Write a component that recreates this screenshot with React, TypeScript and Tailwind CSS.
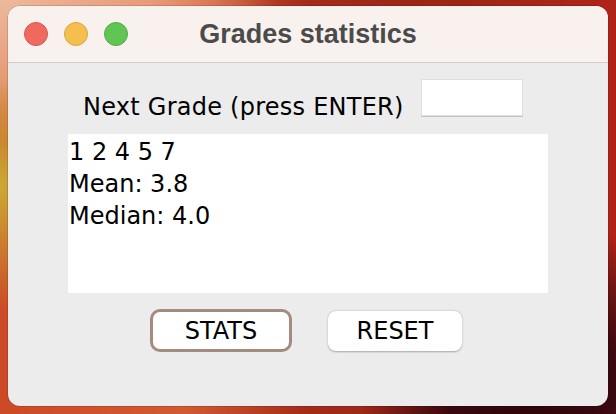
import React from "react";

export default function App() {
  const body = { fontFamily: '"DejaVu Sans", "Lucida Grande", sans-serif' };
  return (
    <div className="w-[616px] h-[414px] overflow-hidden pt-[6px] pl-[8px] bg-[radial-gradient(ellipse_28%_40%_at_86%_92%,#2a0407_0%,#3a0810_50%,rgba(58,8,16,0)_100%),radial-gradient(ellipse_12%_30%_at_0%_45%,#cbaa34_0%,rgba(203,170,52,0)_100%),radial-gradient(ellipse_45%_35%_at_0%_0%,#ecb99c_0%,#e89a78_55%,rgba(232,140,100,0)_100%),linear-gradient(90deg,#cc4a26_0%,#d25a30_30%,#a42a1a_50%,#9a2616_70%,#b02418_100%)]">
      <div className="w-[600px] h-[400px] rounded-[12px] overflow-hidden flex flex-col bg-[#ececec] shadow-[0_0_0_0.5px_rgba(0,0,0,0.25)]">
        {/* Title bar */}
        <div className="relative h-[57px] shrink-0 bg-[#f9f1ee] border-b border-[#d2cecc] flex items-center pl-[16px]">
          <div className="flex items-center gap-[16px]">
            <div className="w-[24px] h-[24px] rounded-full bg-[#ee6a5f] border border-[#d9574c]" />
            <div className="w-[24px] h-[24px] rounded-full bg-[#f5bf4f] border border-[#dca53a]" />
            <div className="w-[24px] h-[24px] rounded-full bg-[#61c554] border border-[#4fae43]" />
          </div>
          <div
            className="absolute inset-0 flex items-center justify-center text-[27px] font-bold text-[#4b4b4b] pointer-events-none"
            style={{ fontFamily: '"Liberation Sans", Arial, sans-serif' }}
          >
            Grades statistics
          </div>
        </div>

        {/* Content */}
        <div className="flex flex-col" style={body}>
          <div className="flex items-start pl-[75px]">
            <div className="mt-[28px] text-[24px] leading-[32px] tracking-[0.25px] text-black">
              Next Grade (press ENTER)
            </div>
            <div className="ml-[17px] mt-[16px] w-[102px] h-[37px] bg-white border border-[#dedede] shadow-[0_1px_0_#c4c4c4]" />
          </div>

          <div className="ml-[60px] mt-[11px] w-[480px] h-[159px] bg-white pl-[1px] pt-[2px] text-[24px] leading-[32px] text-black">
            <div>1 2 4 5 7</div>
            <div>Mean: 3.8</div>
            <div>Median: 4.0</div>
          </div>

          <div className="flex items-center pl-[142px] mt-[16px]">
            <div className="w-[142px] h-[43px] rounded-[10px] border-[3px] border-[#a38b80] bg-white flex items-center justify-center text-[24px] text-black">
              STATS
            </div>
            <div className="ml-[36px] w-[134px] h-[40px] rounded-[8px] bg-white shadow-[0_0.5px_2px_rgba(0,0,0,0.3)] flex items-center justify-center text-[24px] text-black">
              RESET
            </div>
          </div>
        </div>
      </div>
    </div>
  );
}
